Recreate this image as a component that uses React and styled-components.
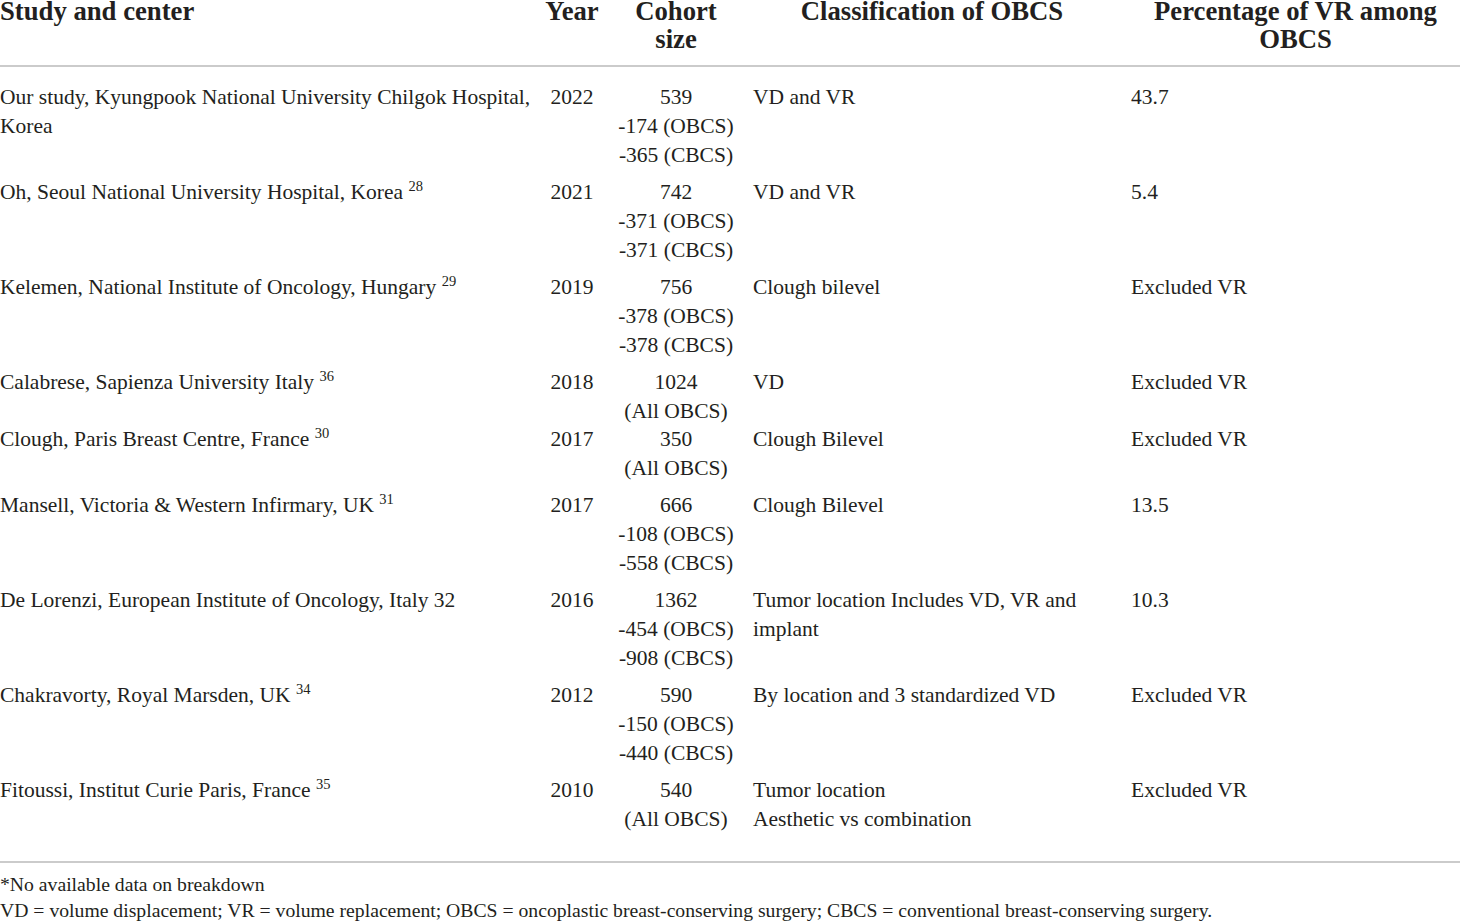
import React from "react";
import styled, { createGlobalStyle } from "styled-components";

const Global = createGlobalStyle`
  html, body { margin: 0; padding: 0; background: #fff; overflow: hidden; }
  body { font-family: "Liberation Serif", "Times New Roman", serif; color: #231f20; }
`;

const Page = styled.div`
  width: 1460px;
  margin-top: -3px;
`;

const Row = styled.div`
  display: grid;
  grid-template-columns: 540px 64px 144px 378px 1fr;
  margin-bottom: ${(p) => p.$gap ?? 8}px;
`;

const HeadRow = styled(Row)`
  margin-bottom: 0;
  padding-bottom: 12px;
  border-bottom: 2px solid #cbcbcb;
`;

const Body = styled.div`
  padding-top: 16px;
  padding-bottom: 19px;
  border-bottom: 2px solid #cbcbcb;
`;

const pads = ["0", "0", "0", "0 15px 0 5px", "0 0 0 5px"];

const Cell = styled.div`
  padding: ${(p) => pads[p.$col]};
  text-align: ${(p) => p.$align || "left"};
  font-size: 21.5px;
  line-height: 29px;
`;

const HeadCell = styled(Cell)`
  font-weight: bold;
  font-size: 26.7px;
  line-height: 28px;
  text-align: ${(p) => p.$align || "center"};
`;

const Sup = styled.sup`
  font-size: 14.5px;
  line-height: 0;
  vertical-align: 8px;
`;

const Notes = styled.div`
  padding-top: 8px;
  font-size: 19.7px;
  line-height: 26px;
`;

const rows = [
  {
    study: "Our study, Kyungpook National University Chilgok Hospital, Korea",
    year: "2022",
    cohort: ["539", "-174 (OBCS)", "-365 (CBCS)"],
    cls: ["VD and VR"],
    pct: "43.7",
  },
  {
    study: "Oh, Seoul National University Hospital, Korea",
    ref: "28",
    year: "2021",
    cohort: ["742", "-371 (OBCS)", "-371 (CBCS)"],
    cls: ["VD and VR"],
    pct: "5.4",
  },
  {
    study: "Kelemen, National Institute of Oncology, Hungary",
    ref: "29",
    year: "2019",
    cohort: ["756", "-378 (OBCS)", "-378 (CBCS)"],
    cls: ["Clough bilevel"],
    pct: "Excluded VR",
  },
  {
    study: "Calabrese, Sapienza University Italy",
    ref: "36",
    year: "2018",
    cohort: ["1024", "(All OBCS)"],
    cls: ["VD"],
    pct: "Excluded VR",
    gap: -1,
  },
  {
    study: "Clough, Paris Breast Centre, France",
    ref: "30",
    year: "2017",
    cohort: ["350", "(All OBCS)"],
    cls: ["Clough Bilevel"],
    pct: "Excluded VR",
  },
  {
    study: "Mansell, Victoria & Western Infirmary, UK",
    ref: "31",
    year: "2017",
    cohort: ["666", "-108 (OBCS)", "-558 (CBCS)"],
    cls: ["Clough Bilevel"],
    pct: "13.5",
  },
  {
    study: "De Lorenzi, European Institute of Oncology, Italy 32",
    year: "2016",
    cohort: ["1362", "-454 (OBCS)", "-908 (CBCS)"],
    cls: ["Tumor location Includes VD, VR and implant"],
    pct: "10.3",
  },
  {
    study: "Chakravorty, Royal Marsden, UK",
    ref: "34",
    year: "2012",
    cohort: ["590", "-150 (OBCS)", "-440 (CBCS)"],
    cls: ["By location and 3 standardized VD"],
    pct: "Excluded VR",
  },
  {
    study: "Fitoussi, Institut Curie Paris, France",
    ref: "35",
    year: "2010",
    cohort: ["540", "(All OBCS)"],
    cls: ["Tumor location", "Aesthetic vs combination"],
    pct: "Excluded VR",
  },
];

const Lines = ({ items }) =>
  items.map((t, i) => (
    <React.Fragment key={i}>
      {i > 0 && <br />}
      {t}
    </React.Fragment>
  ));

export default function App() {
  return (
    <Page>
      <Global />
      <HeadRow>
        <HeadCell $col={0} $align="left">Study and center</HeadCell>
        <HeadCell $col={1}>Year</HeadCell>
        <HeadCell $col={2}>
          Cohort
          <br />
          size
        </HeadCell>
        <HeadCell $col={3}>Classification of OBCS</HeadCell>
        <HeadCell $col={4}>
          Percentage of VR among
          <br />
          OBCS
        </HeadCell>
      </HeadRow>
      <Body>
        {rows.map((r, i) => (
          <Row key={i} $gap={r.gap}>
            <Cell $col={0}>
              {r.study}
              {r.ref && (
                <>
                  {" "}
                  <Sup>{r.ref}</Sup>
                </>
              )}
            </Cell>
            <Cell $col={1} $align="center">{r.year}</Cell>
            <Cell $col={2} $align="center">
              <Lines items={r.cohort} />
            </Cell>
            <Cell $col={3}>
              <Lines items={r.cls} />
            </Cell>
            <Cell $col={4}>{r.pct}</Cell>
          </Row>
        ))}
      </Body>
      <Notes>
        *No available data on breakdown
        <br />
        VD = volume displacement; VR = volume replacement; OBCS = oncoplastic
        breast-conserving surgery; CBCS = conventional breast-conserving surgery.
      </Notes>
    </Page>
  );
}
